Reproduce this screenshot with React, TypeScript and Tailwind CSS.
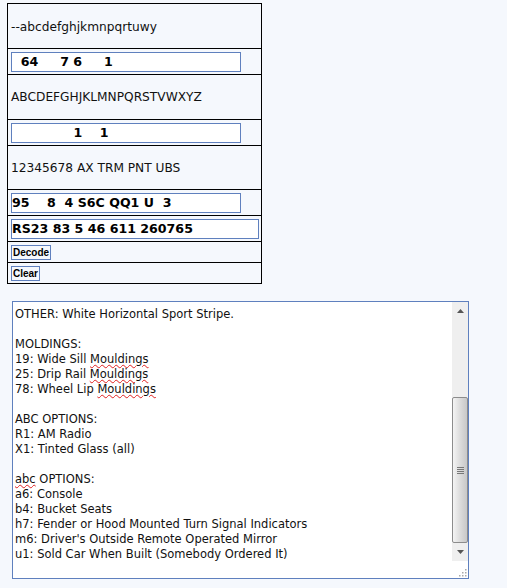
import React from 'react';

const font = "font-['DejaVu_Sans',Verdana,sans-serif]";

const LabelRow = ({ text, h }: { text: string; h: string }) => (
  <div className={`${h} flex items-center border-b border-black pl-[3px] pt-[1px] text-[12.2px] text-[#111]`}>
    {text}
  </div>
);

const InputRow = ({ value, wide }: { value: string; wide?: boolean }) => (
  <div className="h-[26px] border-b border-black pl-[3px] pt-[3px]">
    <div
      className={`${wide ? 'w-[248px]' : 'w-[230px]'} h-[20px] border border-[#5f80be] bg-white text-[12.6px] font-bold leading-[18px] whitespace-pre text-black`}
    >
      {value}
    </div>
  </div>
);

const Sq = ({ children }: { children: React.ReactNode }) => (
  <span className="underline decoration-wavy decoration-[#e02020] decoration-1 underline-offset-[1px]">
    {children}
  </span>
);

const lines: React.ReactNode[] = [
  'OTHER: White Horizontal Sport Stripe.',
  '',
  'MOLDINGS:',
  <>19: Wide Sill <Sq>Mouldings</Sq></>,
  <>25: Drip Rail <Sq>Mouldings</Sq></>,
  <>78: Wheel Lip <Sq>Mouldings</Sq></>,
  '',
  'ABC OPTIONS:',
  'R1: AM Radio',
  'X1: Tinted Glass (all)',
  '',
  <><Sq>abc</Sq> OPTIONS:</>,
  'a6: Console',
  'b4: Bucket Seats',
  'h7: Fender or Hood Mounted Turn Signal Indicators',
  "m6: Driver's Outside Remote Operated Mirror",
  'u1: Sold Car When Built (Somebody Ordered It)',
];

const btn =
  "h-[15px] border border-[#5f80be] px-[1px] font-['Liberation_Sans',Arial,sans-serif] text-[10px] font-bold leading-[13px] text-black";

export default function App() {
  return (
    <div className={`${font} min-h-[588px] w-[507px] bg-[#f5f8fd] pt-[3px]`}>
      <div className="ml-[7px] w-[255px] border border-b-0 border-black">
        <LabelRow text="--abcdefghjkmnpqrtuwy" h="h-[45px] pt-[3px]" />
        <InputRow value="  64     7 6     1" />
        <LabelRow text="ABCDEFGHJKLMNPQRSTVWXYZ" h="h-[45px]" />
        <InputRow value="              1    1" />
        <LabelRow text="12345678 AX TRM PNT UBS" h="h-[44px]" />
        <InputRow value="95    8  4 S6C QQ1 U  3" />
        <InputRow value="RS23 83 5 46 611 260765" wide />
        <div className="flex h-[21px] items-center border-b border-black pl-[3px]">
          <button className={btn}>Decode</button>
        </div>
        <div className="flex h-[21px] items-center border-b border-black pl-[3px]">
          <button className={btn}>Clear</button>
        </div>
      </div>

      <div className="ml-[12px] mt-[17px] flex h-[278px] w-[457px] border border-[#5f80be] bg-white">
        <div className="flex-1 overflow-hidden pl-[2px] pt-[5px] text-[11.5px] leading-[15px] text-[#111]">
          {lines.map((l, i) => (
            <div key={i} className="h-[15px] whitespace-pre">
              {l}
            </div>
          ))}
        </div>
        <div className="flex w-[16px] flex-col">
          <div className="flex flex-1 flex-col bg-[#efefef]">
            <div className="flex h-[17px] items-center justify-center">
              <svg width="7" height="4" viewBox="0 0 7 4">
                <path d="M0 4 L3.5 0 L7 4 Z" fill="#555" />
              </svg>
            </div>
            <div className="h-[78px]" />
            <div className="flex h-[146px] items-center justify-center rounded-[2px] border border-[#8c8c8c] bg-gradient-to-r from-[#f4f4f4] via-[#dcdcdc] to-[#c8c8c8]">
              <div className="flex flex-col gap-[1px]">
                <div className="h-[1px] w-[7px] bg-[#777]" />
                <div className="h-[1px] w-[7px] bg-[#777]" />
                <div className="h-[1px] w-[7px] bg-[#777]" />
                <div className="h-[1px] w-[7px] bg-[#777]" />
              </div>
            </div>
            <div className="flex h-[17px] items-center justify-center">
              <svg width="7" height="4" viewBox="0 0 7 4">
                <path d="M0 0 L7 0 L3.5 4 Z" fill="#555" />
              </svg>
            </div>
          </div>
          <div className="flex h-[17px] items-end justify-end bg-white p-[1px]">
            <svg width="9" height="9" viewBox="0 0 9 9">
              <rect x="7" y="1" width="1.5" height="1.5" fill="#aaa" />
              <rect x="4" y="4" width="1.5" height="1.5" fill="#aaa" />
              <rect x="7" y="4" width="1.5" height="1.5" fill="#aaa" />
              <rect x="1" y="7" width="1.5" height="1.5" fill="#aaa" />
              <rect x="4" y="7" width="1.5" height="1.5" fill="#aaa" />
              <rect x="7" y="7" width="1.5" height="1.5" fill="#aaa" />
            </svg>
          </div>
        </div>
      </div>
    </div>
  );
}
